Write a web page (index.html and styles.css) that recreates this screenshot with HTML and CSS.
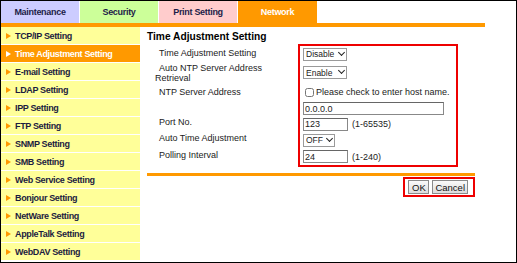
FILE: index.html
```html
<!DOCTYPE html>
<html lang="en">
<head>
  <meta charset="UTF-8">
  <title>Time Adjustment Setting</title>
  <link rel="stylesheet" href="styles.css">
</head>
<body>
  <div class="frame">
    <div class="tabs">
      <div class="tab tab-maint">Maintenance</div>
      <div class="tab tab-sec">Security</div>
      <div class="tab tab-print">Print Setting</div>
      <div class="tab tab-net">Network</div>
    </div>
    <div class="tab-line"></div>

    <div class="page">
      <ul class="menu">
        <li>TCP/IP Setting</li>
        <li class="active">Time Adjustment Setting</li>
        <li>E-mail Setting</li>
        <li>LDAP Setting</li>
        <li>IPP Setting</li>
        <li>FTP Setting</li>
        <li>SNMP Setting</li>
        <li>SMB Setting</li>
        <li>Web Service Setting</li>
        <li>Bonjour Setting</li>
        <li>NetWare Setting</li>
        <li>AppleTalk Setting</li>
        <li>WebDAV Setting</li>
      </ul>

      <div class="main">
        <h2>Time Adjustment Setting</h2>

        <div class="form">
          <div class="labels">
            <div class="row r1">Time Adjustment Setting</div>
            <div class="row r2">Auto NTP Server Address Retrieval</div>
            <div class="row r3">NTP Server Address</div>
            <div class="row r4"></div>
            <div class="row r5">Port No.</div>
            <div class="row r6">Auto Time Adjustment</div>
            <div class="row r7">Polling Interval</div>
          </div>

          <div class="fields">
            <div class="row r1">
              <span class="select sel-wide">
                <select><option>Disable</option><option>Enable</option></select>
              </span>
            </div>
            <div class="row r2">
              <span class="select sel-wide">
                <select><option>Enable</option><option>Disable</option></select>
              </span>
            </div>
            <div class="row r3">
              <label class="check"><input type="checkbox"> Please check to enter host name.</label>
            </div>
            <div class="row r4">
              <input class="txt txt-long" type="text" value="0.0.0.0">
            </div>
            <div class="row r5">
              <input class="txt txt-short" type="text" value="123"><span class="range">(1-65535)</span>
            </div>
            <div class="row r6">
              <span class="select sel-small">
                <select><option>OFF</option><option>ON</option></select>
              </span>
            </div>
            <div class="row r7">
              <input class="txt txt-short" type="text" value="24"><span class="range">(1-240)</span>
            </div>
          </div>
        </div>

        <div class="rule"></div>

        <div class="actions">
          <div class="btn-box">
            <button class="btn btn-ok">OK</button>
            <button class="btn">Cancel</button>
          </div>
        </div>
      </div>
    </div>
  </div>
</body>
</html>
```

FILE: styles.css
```css
body {
  margin: 0;
  font-family: 'Liberation Sans', Arial, sans-serif;
  background-color: #ffffff;
  color: #111111;
}

.frame {
  width: 517px;
  height: 263px;
  box-sizing: border-box;
  border: 1px solid #000000;
  overflow: hidden;
}

.tabs {
  display: flex;
  gap: 1px;
  height: 22px;
}

.tab {
  width: 78px;
  display: flex;
  align-items: center;
  justify-content: center;
  font-size: 9px;
  font-weight: bold;
  letter-spacing: -0.3px;
  color: #1c1c48;
}

.tab-maint {
  background-color: #ccccff;
}

.tab-sec {
  background-color: #ccff99;
}

.tab-print {
  background-color: #ffcccc;
}

.tab-net {
  width: 79px;
  background-color: #ff9900;
  color: #ffffff;
}

.tab-line {
  width: 484px;
  height: 4px;
  background-color: #ff9900;
}

.page {
  display: flex;
  height: 235px;
}

.menu {
  list-style: none;
  margin: 0;
  padding: 0;
  width: 139px;
  flex-shrink: 0;
  background-color: #ffffff;
}

.menu li {
  display: flex;
  align-items: center;
  gap: 4px;
  height: 17px;
  padding-left: 5px;
  margin-bottom: 1px;
  background-color: #ffff99;
  font-size: 9px;
  font-weight: bold;
  letter-spacing: -0.35px;
  color: #1c1c40;
}

.menu li::before {
  content: '';
  width: 0;
  height: 0;
  border-top: 3px solid transparent;
  border-bottom: 3px solid transparent;
  border-left: 5px solid #ff9900;
}

.menu li.active {
  background-color: #ff9900;
  color: #ffffff;
}

.menu li.active::before {
  border-left-color: #ffffff;
}

.main {
  width: 328px;
  padding-left: 7px;
}

h2 {
  margin: 4px 0 0 0;
  font-size: 10.2px;
  line-height: 12px;
  font-weight: bold;
  color: #000000;
}

.form {
  display: flex;
  margin-top: 1px;
}

.labels {
  width: 151px;
  box-sizing: border-box;
  padding: 0 8px 0 8px;
  font-size: 9px;
  line-height: 10px;
  color: #222222;
}

.fields {
  width: 160px;
  height: 123px;
  box-sizing: border-box;
  border: 2px solid #ee0000;
  padding-left: 3px;
  font-size: 9px;
  color: #222222;
}

.row {
  display: flex;
  align-items: center;
  box-sizing: border-box;
}

.r1 { height: 16px; }
.r2 { height: 21px; }
.r3 { height: 18px; }
.r4 { height: 15px; }
.r5 { height: 16px; }
.r6 { height: 16px; }
.r7 { height: 17px; }

.labels .row {
  display: block;
  text-indent: 4px;
  padding-top: 1px;
}

.labels .r1 {
  height: 18px;
  padding-top: 4px;
}

.labels .r3 {
  padding-top: 4px;
}

.labels .r7 {
  height: 19px;
  padding-top: 2px;
}

.select {
  position: relative;
  display: inline-block;
  height: 13px;
}

.select::after {
  content: '';
  position: absolute;
  right: 3px;
  top: 2px;
  width: 4px;
  height: 4px;
  border-right: 1.5px solid #222222;
  border-bottom: 1.5px solid #222222;
  transform: rotate(45deg);
  pointer-events: none;
}

.select select {
  appearance: none;
  width: 100%;
  height: 13px;
  padding: 0 0 0 2px;
  font-family: 'Liberation Sans', Arial, sans-serif;
  font-size: 8.5px;
  color: #222222;
  background-color: #ffffff;
  border: 1px solid #9a9a9a;
  border-radius: 0;
}

.sel-wide {
  width: 44px;
}

.sel-small {
  width: 32px;
}

.check {
  display: flex;
  align-items: center;
  gap: 2px;
  margin-left: 2px;
  white-space: nowrap;
  font-size: 9px;
}

.check input {
  width: 9px;
  height: 9px;
  margin: 0;
}

.txt {
  height: 13px;
  box-sizing: border-box;
  padding: 0 1px;
  font-family: 'Liberation Sans', Arial, sans-serif;
  font-size: 9px;
  color: #222222;
  border: 1px solid #888888;
  border-top-color: #666666;
}

.txt-long {
  width: 141px;
}

.txt-short {
  width: 45px;
}

.range {
  margin-left: 4px;
}

.rule {
  margin-top: 6px;
  height: 3px;
  background-color: #ff9900;
}

.actions {
  display: flex;
  justify-content: flex-end;
  margin-top: 1px;
}

.btn-box {
  display: flex;
  gap: 3px;
  padding: 1px 5px 1px 3px;
  border: 2px solid #ee0000;
}

.btn {
  height: 14px;
  padding: 0 2px;
  font-family: 'Liberation Sans', Arial, sans-serif;
  font-size: 9.5px;
  color: #111111;
  background: linear-gradient(#fafafa, #dcdcdc);
  border: 1px solid #8a8a8a;
  border-radius: 0;
}

.btn-ok {
  width: 21px;
}
```
